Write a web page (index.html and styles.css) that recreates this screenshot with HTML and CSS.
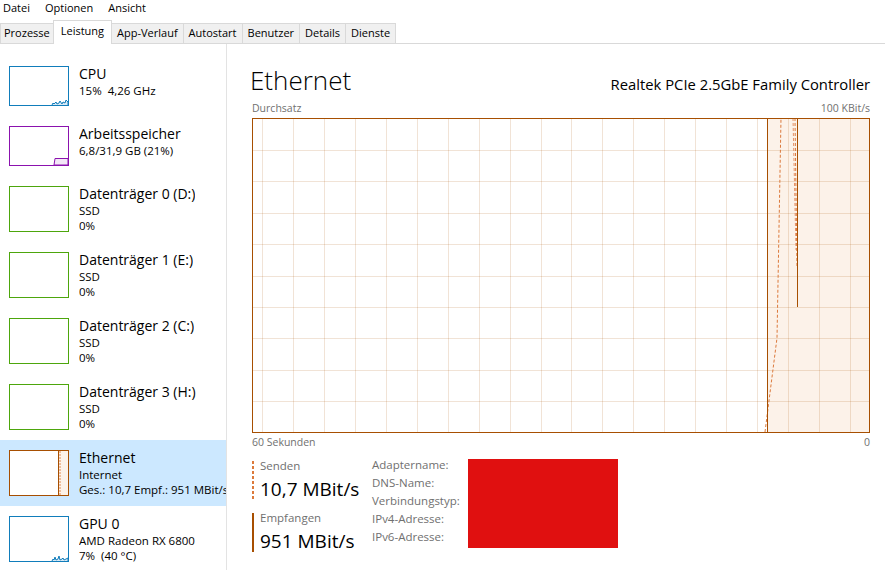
FILE: index.html
```html
<!DOCTYPE html>
<html lang="de">
<head>
<meta charset="utf-8">
<title>Task-Manager</title>
<link rel="stylesheet" href="styles.css">
</head>
<body>
<div class="app">
  <div class="menubar">
    <span class="menu">Datei</span>
    <span class="menu">Optionen</span>
    <span class="menu">Ansicht</span>
  </div>
  <div class="tabs">
    <div class="tab first">Prozesse</div>
    <div class="tab active">Leistung</div>
    <div class="tab">App-Verlauf</div>
    <div class="tab">Autostart</div>
    <div class="tab">Benutzer</div>
    <div class="tab">Details</div>
    <div class="tab">Dienste</div>
  </div>
  <div class="main">
    <div class="sidebar">
      <div class="item short">
        <div class="thumb cpu">
          <svg width="58" height="38" viewBox="0 0 58 38"><polyline points="42,38 43,36 44,37 46,35 47,37 49,36 50,34 52,37 53,35 55,36 56,33 58,35 58,38" fill="#d8e9f5" stroke="#117dbb" stroke-width="1"/></svg>
        </div>
        <div class="info">
          <div class="name">CPU</div>
          <div class="sub">15%&nbsp; 4,26 GHz</div>
        </div>
      </div>
      <div class="item short">
        <div class="thumb mem">
          <svg width="58" height="38" viewBox="0 0 58 38"><polygon points="44,38 45,31.5 58,31.5 58,38" fill="#f3e7f7" stroke="#8b12ae" stroke-width="1"/></svg>
        </div>
        <div class="info">
          <div class="name">Arbeitsspeicher</div>
          <div class="sub">6,8/31,9 GB (21%)</div>
        </div>
      </div>
      <div class="item">
        <div class="thumb disk"></div>
        <div class="info">
          <div class="name">Datenträger 0 (D:)</div>
          <div class="sub">SSD</div>
          <div class="sub">0%</div>
        </div>
      </div>
      <div class="item">
        <div class="thumb disk"></div>
        <div class="info">
          <div class="name">Datenträger 1 (E:)</div>
          <div class="sub">SSD</div>
          <div class="sub">0%</div>
        </div>
      </div>
      <div class="item">
        <div class="thumb disk"></div>
        <div class="info">
          <div class="name">Datenträger 2 (C:)</div>
          <div class="sub">SSD</div>
          <div class="sub">0%</div>
        </div>
      </div>
      <div class="item">
        <div class="thumb disk"></div>
        <div class="info">
          <div class="name">Datenträger 3 (H:)</div>
          <div class="sub">SSD</div>
          <div class="sub">0%</div>
        </div>
      </div>
      <div class="item selected">
        <div class="thumb eth">
          <svg width="58" height="44" viewBox="0 0 58 44"><rect x="48" y="0" width="10" height="44" fill="#fcf2e9"/><line x1="48.5" y1="0" x2="48.5" y2="44" stroke="#a74f01" stroke-width="1"/><line x1="50" y1="0" x2="50" y2="44" stroke="#e08a50" stroke-width="1" stroke-dasharray="2 1"/></svg>
        </div>
        <div class="info">
          <div class="name">Ethernet</div>
          <div class="sub">Internet</div>
          <div class="sub">Ges.: 10,7 Empf.: 951 MBit/s</div>
        </div>
      </div>
      <div class="item">
        <div class="thumb gpu">
          <svg width="58" height="44" viewBox="0 0 58 44"><polyline points="42,44 43,42 44,43 45,40 46,43 48,42 49,39 50,43 52,42 53,41 54,43 56,42 58,41 58,44" fill="#d8e9f5" stroke="#117dbb" stroke-width="1"/></svg>
        </div>
        <div class="info">
          <div class="name">GPU 0</div>
          <div class="sub">AMD Radeon RX 6800</div>
          <div class="sub">7%&nbsp; (40 °C)</div>
        </div>
      </div>
    </div>
    <div class="detail">
      <div class="head">
        <div class="title">Ethernet</div>
        <div class="model">Realtek PCIe 2.5GbE Family Controller</div>
      </div>
      <div class="axis axis-top"><span>Durchsatz</span><span>100 KBit/s</span></div>
      <svg class="graph" width="618" height="315" viewBox="0 0 618 315">
        <rect x="515.5" y="0" width="102.5" height="315" fill="#fcf2e9"/>
        <path d="M0 32.5H618M0 63.5H618M0 95.5H618M0 126.5H618M0 158.5H618M0 189.5H618M0 220.5H618M0 252.5H618M0 283.5H618M10.5 0V315M41.5 0V315M72.5 0V315M103.5 0V315M134.5 0V315M165.5 0V315M196.5 0V315M227.5 0V315M258.5 0V315M289.5 0V315M319.5 0V315M350.5 0V315M381.5 0V315M412.5 0V315M443.5 0V315M474.5 0V315M505.5 0V315M536.5 0V315M567.5 0V315M598.5 0V315" stroke="#a74f01" stroke-opacity="0.16" stroke-width="1" fill="none"/>
        <polyline points="513,314 525,220 529,0" fill="none" stroke="#dc7a3c" stroke-width="1" stroke-dasharray="3 2"/>
        <polyline points="541,0 544,132" fill="none" stroke="#e5946a" stroke-width="1" stroke-dasharray="3 2"/>
        <polyline points="543,0 545,150" fill="none" stroke="#dc7a3c" stroke-width="1" stroke-dasharray="3 2"/>
        <line x1="515.5" y1="315" x2="515.5" y2="0" stroke="#a74f01" stroke-width="1"/>
        <line x1="545.5" y1="0" x2="545.5" y2="189" stroke="#a74f01" stroke-width="1"/>
        <rect x="0.5" y="0.5" width="617" height="314" fill="none" stroke="#a74f01" stroke-width="1"/>
      </svg>
      <div class="axis axis-bottom"><span>60 Sekunden</span><span>0</span></div>
      <div class="stats">
        <div class="rates">
          <div class="rate">
            <div class="bar bar-send"></div>
            <div class="rate-text">
              <div class="rate-label">Senden</div>
              <div class="rate-value">10,7 MBit/s</div>
            </div>
          </div>
          <div class="rate">
            <div class="bar bar-recv"></div>
            <div class="rate-text">
              <div class="rate-label">Empfangen</div>
              <div class="rate-value">951 MBit/s</div>
            </div>
          </div>
        </div>
        <div class="props">
          <div>Adaptername:</div>
          <div>DNS-Name:</div>
          <div>Verbindungstyp:</div>
          <div>IPv4-Adresse:</div>
          <div>IPv6-Adresse:</div>
        </div>
        <div class="redact"></div>
      </div>
    </div>
  </div>
</div>
</body>
</html>
```
FILE: styles.css
```css
* { box-sizing: border-box; }
html, body { margin: 0; padding: 0; background: #fff; }
body {
  font-family: "Open Sans", "Noto Sans", sans-serif;
  color: #000;
  width: 885px;
  height: 570px;
  overflow: hidden;
}
.app { width: 885px; height: 570px; display: flex; flex-direction: column; }

.menubar {
  height: 17px;
  display: flex;
  gap: 15px;
  padding-left: 3px;
  font-size: 11px;
  line-height: 16px;
}

.tabs {
  height: 27px;
  display: flex;
  align-items: flex-end;
  border-bottom: 1px solid #d9d9d9;
  font-size: 11px;
}
.tab {
  height: 20px;
  line-height: 18px;
  padding: 0 5px;
  background: #f0f0f0;
  border: 1px solid #d9d9d9;
  border-bottom: none;
  margin-right: -1px;
  white-space: nowrap;
}
.tab.first { padding: 0 3px; }
.tab.active {
  height: 24px;
  line-height: 20px;
  padding: 0 7px;
  background: #fff;
  margin-bottom: -1px;
  position: relative;
  z-index: 1;
}

.main { flex: 1; display: flex; min-height: 0; }

.sidebar {
  width: 227px;
  border-right: 1px solid #e3e3e3;
  padding-top: 12px;
  flex: none;
  overflow: hidden;
}
.item {
  height: 66px;
  display: flex;
  gap: 10px;
  padding: 10px 0 0 9px;
}
.item.short { height: 60px; }
.item.selected { background: #cce8ff; }
.thumb {
  width: 60px;
  height: 46px;
  border: 1px solid;
  background: #fff;
  flex: none;
  overflow: hidden;
}
.thumb svg { display: block; }
.item.short .thumb { height: 40px; }
.thumb.cpu, .thumb.gpu { border-color: #117dbb; }
.thumb.mem { border-color: #8b12ae; }
.thumb.disk { border-color: #4da60c; }
.thumb.eth { border-color: #a74f01; }
.info {
  margin-top: -1px;
  min-width: 0;
  overflow: hidden;
  white-space: nowrap;
}
.name { font-size: 14px; line-height: 18px; }
.sub { font-size: 11.5px; line-height: 15px; }

.detail {
  flex: 1;
  min-width: 0;
  padding: 21px 15px 0 25px;
  display: flex;
  flex-direction: column;
}
.head {
  height: 30px;
  display: flex;
  justify-content: space-between;
  align-items: baseline;
}
.title {
  font-size: 26px;
  font-weight: 300;
  line-height: 30px;
  margin-left: -2px;
}
.model { font-size: 14.8px; line-height: 20px; }

.axis {
  display: flex;
  justify-content: space-between;
  font-size: 10.5px;
  line-height: 14px;
  color: #707070;
}
.axis-top { margin-top: 6px; }
.graph { display: block; margin-top: 3px; flex: none; }
.axis-bottom { margin-top: 2px; }

.stats {
  margin-top: 7px;
  display: flex;
  align-items: flex-start;
}
.rates {
  width: 120px;
  padding-top: 2px;
  display: flex;
  flex-direction: column;
  gap: 9px;
}
.rate { display: flex; gap: 6px; }
.bar { width: 2px; flex: none; margin: 3px 0 1px 0; }
.bar-send {
  background: repeating-linear-gradient(to bottom, #dc7a3c 0 3px, transparent 3px 5px);
}
.bar-recv { background: #a74f01; }
.rate-label { font-size: 11.5px; line-height: 15px; color: #707070; }
.rate-value { font-size: 19px; line-height: 24px; margin-top: 4px; }

.props {
  width: 96px;
  font-size: 11.5px;
  line-height: 18px;
  color: #707070;
  white-space: nowrap;
}
.redact {
  width: 150px;
  height: 89px;
  margin-top: 3px;
  background: #e01010;
}
```
